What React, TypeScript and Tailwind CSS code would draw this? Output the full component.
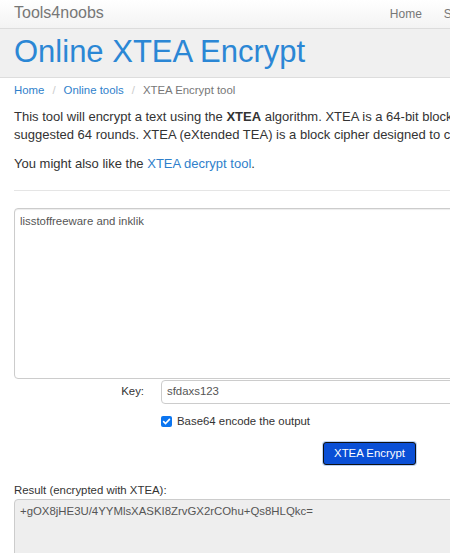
import React from "react";

export default function App() {
  return (
    <div
      className="w-[450px] h-[553px] overflow-hidden bg-white"
      style={{ fontFamily: '"Liberation Sans", Arial, sans-serif' }}
    >
      <div className="w-[900px]">
        {/* Navbar */}
        <div className="h-[29px] bg-gradient-to-b from-white to-[#f3f3f3] border-b border-[#dcdcdc] shadow-[0_1px_2px_rgba(0,0,0,0.06)] flex items-baseline pt-[4px] pl-[14px]">
          <span className="text-[16px] leading-[18px] text-[#777]">Tools4noobs</span>
          <span className="ml-[286px] text-[12px] leading-[14px] text-[#777]">Home</span>
          <span className="ml-[22px] text-[12px] leading-[14px] text-[#777]">Search</span>
        </div>

        {/* Header band */}
        <div className="h-[49px] bg-[#f0f0f0] border-b border-[#dddddd] pl-[14px] pt-[5px]">
          <h1 className="text-[31px] leading-[35px] text-[#2b87d5] font-normal">Online XTEA Encrypt</h1>
        </div>

        <div className="pl-[14px]">
          {/* Breadcrumb */}
          <div className="mt-[4px] text-[11.4px] leading-[16px] flex">
            <span className="text-[#2f7fcb]">Home</span>
            <span className="text-[#ccc] px-[8px]">/</span>
            <span className="text-[#2f7fcb]">Online tools</span>
            <span className="text-[#ccc] px-[8px]">/</span>
            <span className="text-[#777]">XTEA Encrypt tool</span>
          </div>

          {/* Description */}
          <p className="mt-[10px] text-[13px] leading-[18px] text-[#333] whitespace-nowrap">
            This tool will encrypt a text using the <b>XTEA</b> algorithm. XTEA is a 64-bit block
            Feistel network with a 128-bit key and a
            <br />
            suggested 64 rounds. XTEA (eXtended TEA) is a block cipher designed to correct
            weaknesses in TEA.
          </p>
          <p className="mt-[11px] text-[13px] leading-[18px] text-[#333]">
            You might also like the <span className="text-[#2f7fcb]">XTEA decrypt tool</span>.
          </p>

          <div className="mt-[17px] border-t border-[#e5e5e5] w-[870px]" />

          {/* Input textarea */}
          <div className="mt-[17px] h-[171px] w-[870px] border border-[#cccccc] rounded-[4px] shadow-[inset_0_1px_1px_rgba(0,0,0,0.075)] pl-[5px] pt-[4px] text-[11.4px] leading-[16px] text-[#555]">
            lisstoffreeware and inklik
          </div>

          {/* Key row */}
          <div className="mt-[1px] flex items-center">
            <div className="w-[130px] text-right text-[11.4px] text-[#333]">Key:</div>
            <div className="ml-[17px] h-[24px] w-[700px] border border-[#cccccc] rounded-[4px] flex items-center pl-[5px] text-[11.4px] text-[#555]">
              sfdaxs123
            </div>
          </div>

          {/* Checkbox row */}
          <div className="mt-[9px] ml-[147px] h-[16px] flex items-center gap-[5px]">
            <span className="w-[11px] h-[11px] rounded-[2px] bg-[#0b75f0] flex items-center justify-center">
              <svg width="9" height="9" viewBox="0 0 10 10">
                <path d="M1.8 5.2 L4 7.3 L8.3 2.6" fill="none" stroke="white" strokeWidth="1.8" strokeLinecap="round" strokeLinejoin="round" />
              </svg>
            </span>
            <span className="text-[11.4px] leading-[16px] text-[#333]">Base64 encode the output</span>
          </div>

          {/* Button */}
          <div className="mt-[13px] ml-[309px] w-[93px] h-[23px] rounded-[3px] border-[1.5px] border-[#111] bg-[#0a4fd6] shadow-[0_0_0_1px_#bcd3f5] flex items-center justify-center text-white text-[11.4px]">
            XTEA Encrypt
          </div>

          {/* Result */}
          <div className="mt-[17px] text-[11.4px] leading-[16px] text-[#333]">Result (encrypted with XTEA):</div>
          <div className="mt-[1px] h-[120px] w-[870px] bg-[#eeeeee] border border-[#cccccc] rounded-[4px] pl-[5px] pt-[3px] text-[11.4px] leading-[16px] text-[#555]">
            +gOX8jHE3U/4YYMlsXASKI8ZrvGX2rCOhu+Qs8HLQkc=
          </div>
        </div>
      </div>
    </div>
  );
}
